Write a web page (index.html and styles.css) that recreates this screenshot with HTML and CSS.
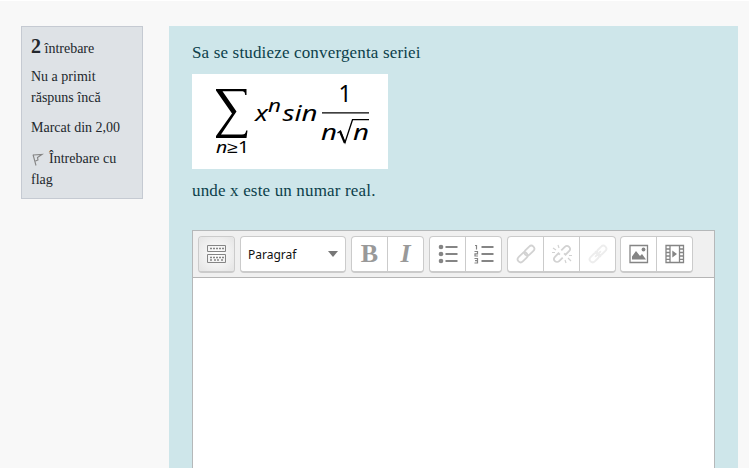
FILE: index.html
```html
<!DOCTYPE html>
<html lang="ro">
<head>
<meta charset="utf-8">
<title>Test</title>
<link rel="stylesheet" href="styles.css">
</head>
<body>
<main class="question">
  <aside class="info">
    <h3 class="number"><b>2</b> întrebare</h3>
    <p class="state">Nu a primit<br>răspuns încă</p>
    <p class="grade">Marcat din 2,00</p>
    <p class="flag"><svg width="14" height="15" viewBox="0 0 14 15"><path d="M2 2.500 5 13.500M2 3l9-.5-4.500 3 .5 2.500L4.500 9" fill="none" stroke="#858585" stroke-width="1.100"/></svg><span>Întrebare cu</span><br>flag</p>
  </aside>
  <section class="content">
    <p class="prompt">Sa se studieze convergenta seriei</p>
    <svg class="formula" width="196" height="95" viewBox="0 0 196 95">
      <path d="M24 15h30.500v6h-1.300c-.4-3-1-3.700-3.500-3.700H30.500L44.500 37.500 29 60.500H50c2.700 0 3.500-1 4.200-4H55.500L54.500 64H24v-2L40 39.500 24 16.500z"/>
      <text x="24" y="78.500" font-size="16" textLength="33" lengthAdjust="spacingAndGlyphs"><tspan class="var">n</tspan>≥1</text>
      <text class="var" x="63" y="46.500" font-size="22" textLength="13" lengthAdjust="spacingAndGlyphs">x</text>
      <text class="var" x="76" y="38" font-size="18" textLength="13" lengthAdjust="spacingAndGlyphs">n</text>
      <text class="var" x="90.500" y="46.500" font-size="22" textLength="35" lengthAdjust="spacingAndGlyphs">sin</text>
      <text x="146.500" y="27.500" font-size="23">1</text>
      <path d="M130 38.200h47v1.400h-47z"/>
      <text class="var" x="129" y="66" font-size="22" textLength="16" lengthAdjust="spacingAndGlyphs">n</text>
      <path d="M145.500 59l3-2 4.500 11.500L160.500 45.700H177" fill="none" stroke="#000" stroke-width="1.300"/><path d="M148 57.500l4.700 11.300" stroke="#000" stroke-width="2"/>
      <text class="var" x="161" y="66" font-size="22" textLength="16" lengthAdjust="spacingAndGlyphs">n</text>
    </svg>
    <p class="condition">unde x este un numar real.</p>
    <div class="editor">
      <div class="toolbar">
        <div class="group"><button class="active" aria-label="Comutare"><svg width="20" height="20"><g fill="none" stroke="#858585"><path d="M.5 1.500h18v6H.5zM.5 10.500h18v8H.5z"/><path d="M3 4.500h14M3 13.500h14M3 16h3M7 16h6M14 16h3" stroke-width="1.500" stroke-dasharray="2 1"/></g></svg></button></div>
        <div class="group"><button class="select"><span>Paragraf</span><i></i></button></div>
        <div class="group"><button class="serif bold">B</button><button class="serif italic">I</button></div>
        <div class="group">
          <button aria-label="Listă"><svg width="20" height="20"><g fill="#858585"><circle cx="3" cy="3" r="2.300"/><circle cx="3" cy="10" r="2.300"/><circle cx="3" cy="17" r="2.300"/><path d="M7.500 2h12v2h-12zM7.500 9h12v2h-12zM7.500 16h12v2h-12z"/></g></svg></button>
          <button aria-label="Listă numerotată"><svg width="20" height="20"><g fill="none" stroke="#858585"><path d="M1 1.500h1.500V5.500M.5 7.500H3.500V9.800H1v2.200H4M.5 14.500H3.500v4.500H.5M1 16.700h2.500" stroke-width="1.200"/><path d="M7.500 3h12M7.500 10h12M7.500 17h12" stroke-width="2"/></g></svg></button>
        </div>
        <div class="group">
          <button aria-label="Legătură"><svg width="20" height="20"><g fill="none" stroke="#d2d2d2" stroke-width="1.800" transform="rotate(-45 10 10)"><rect x="-.5" y="7" width="11.500" height="6" rx="3"/><rect x="9" y="7" width="11.500" height="6" rx="3"/></g></svg></button>
          <button aria-label="Elimină legătura"><svg width="20" height="20"><g fill="none" stroke="#d2d2d2" stroke-width="1.800"><g transform="rotate(-45 10 10)"><path d="M8 13H3a3 3 0 0 1 0-6h5v2M12 7h5a3 3 0 0 1 0 6h-5v-2"/></g><path d="M6 1l1 3M1 4l3 2M0 8.500h3M13 16l1 3M16 14l3 3M17 11.500h3" stroke-width="1.200"/></g></svg></button>
          <button aria-label="Fără legătură"><svg width="20" height="20"><g fill="none" stroke="#ededed" stroke-width="1.900" transform="rotate(-45 10 10)"><rect x="-.5" y="7" width="10.500" height="6" rx="3"/><rect x="10" y="7" width="10.500" height="6" rx="3"/><path d="M6 10h8M10 6v8"/></g></svg></button>
        </div>
        <div class="group">
          <button aria-label="Imagine"><svg width="20" height="20"><path d="M1 1.500h17.500v17H1z" fill="none" stroke="#858585" stroke-width="1.300"/><path d="M3 15.500v-3L7 7l4 5 2-2 4 5.500z" fill="#858585"/><circle cx="14.500" cy="5.500" r="1.900" fill="#858585"/></svg></button>
          <button aria-label="Media"><svg width="20" height="20"><g fill="none" stroke="#858585" stroke-width="1.300"><path d="M1 1.500h17.500v17H1zM5 1.500v17M14.500 1.500v17M1 5h4M1 8.500h4M1 12h4M1 15.300h4M14.500 5h4M14.500 8.500h4M14.500 12h4M14.500 15.300h4"/></g><path d="M7.300 6.500v7L12 10z" fill="#858585"/></svg></button>
        </div>
      </div>
      <div class="page"></div>
    </div>
  </section>
</main>
</body>
</html>
```
FILE: styles.css
```css
* { box-sizing: border-box; }
body { margin: 0; height: 468px; overflow: hidden; background: #f8f8f8; border-top: 1px solid #fff; font-family: "Liberation Serif", serif; }
p, h3 { margin: 0; }
.question { display: flex; align-items: flex-start; padding: 25px 11px 0 21px; height: 467px; }
.info { width: 122px; height: 173px; margin-right: 26px; padding: 7px 8px 0 9px; background: #dee2e6; border: 1px solid #c5cad2; color: #22272c; font-size: 14px; line-height: 21px; white-space: nowrap; }
.number { font-size: 14px; font-weight: normal; line-height: 24px; }
.number b { font-size: 20px; }
.state { margin-top: 5px; }
.grade { margin-top: 9px; }
.flag { margin-top: 10px; }
.flag svg { vertical-align: -4px; margin-right: 4px; }
.content { flex: 1; height: 442px; padding: 16px 23px 0 23px; background: #cee6ea; color: #0b3f4b; font-size: 17px; line-height: 22px; }
.prompt { letter-spacing: .16px; }
.formula { display: block; margin-top: 10px; background: #fff; font-family: "Noto Sans", sans-serif; }
.var { font-style: italic; }
.condition { margin-top: 11px; letter-spacing: .16px; }
.editor { margin-top: 28px; height: 260px; border: 1px solid #b5b8b9; background: #fff; }
.toolbar { display: flex; height: 47px; padding: 5px; background: #f0f0f0; border-bottom: 1px solid #b5b5b5; }
.group { display: flex; flex: none; height: 37px; margin-right: 5px; border: 1px solid #cbcbcb; border-bottom-width: 2px; border-radius: 4px; background: #fff; overflow: hidden; }
.group:nth-child(5) { margin-right: 4px; }
.group button { display: flex; flex: none; align-items: center; justify-content: center; width: 35px; height: 34px; padding: 0; border: 0; background: none; }
.group button + button { width: 36px; border-left: 1px solid #cbcbcb; }
.group .active { background: radial-gradient(#fff, #e4e4e4); }
.group .select { width: 104px; justify-content: space-between; padding: 0 7px; font: 12px "Noto Sans", sans-serif; color: #111; }
.select i { border: 5.5px solid transparent; border-top: 6px solid #777; border-bottom: 0; }
.group .serif { font: bold 26px "Liberation Serif", serif; color: #999; }
.group .italic { font-style: italic; }
```
